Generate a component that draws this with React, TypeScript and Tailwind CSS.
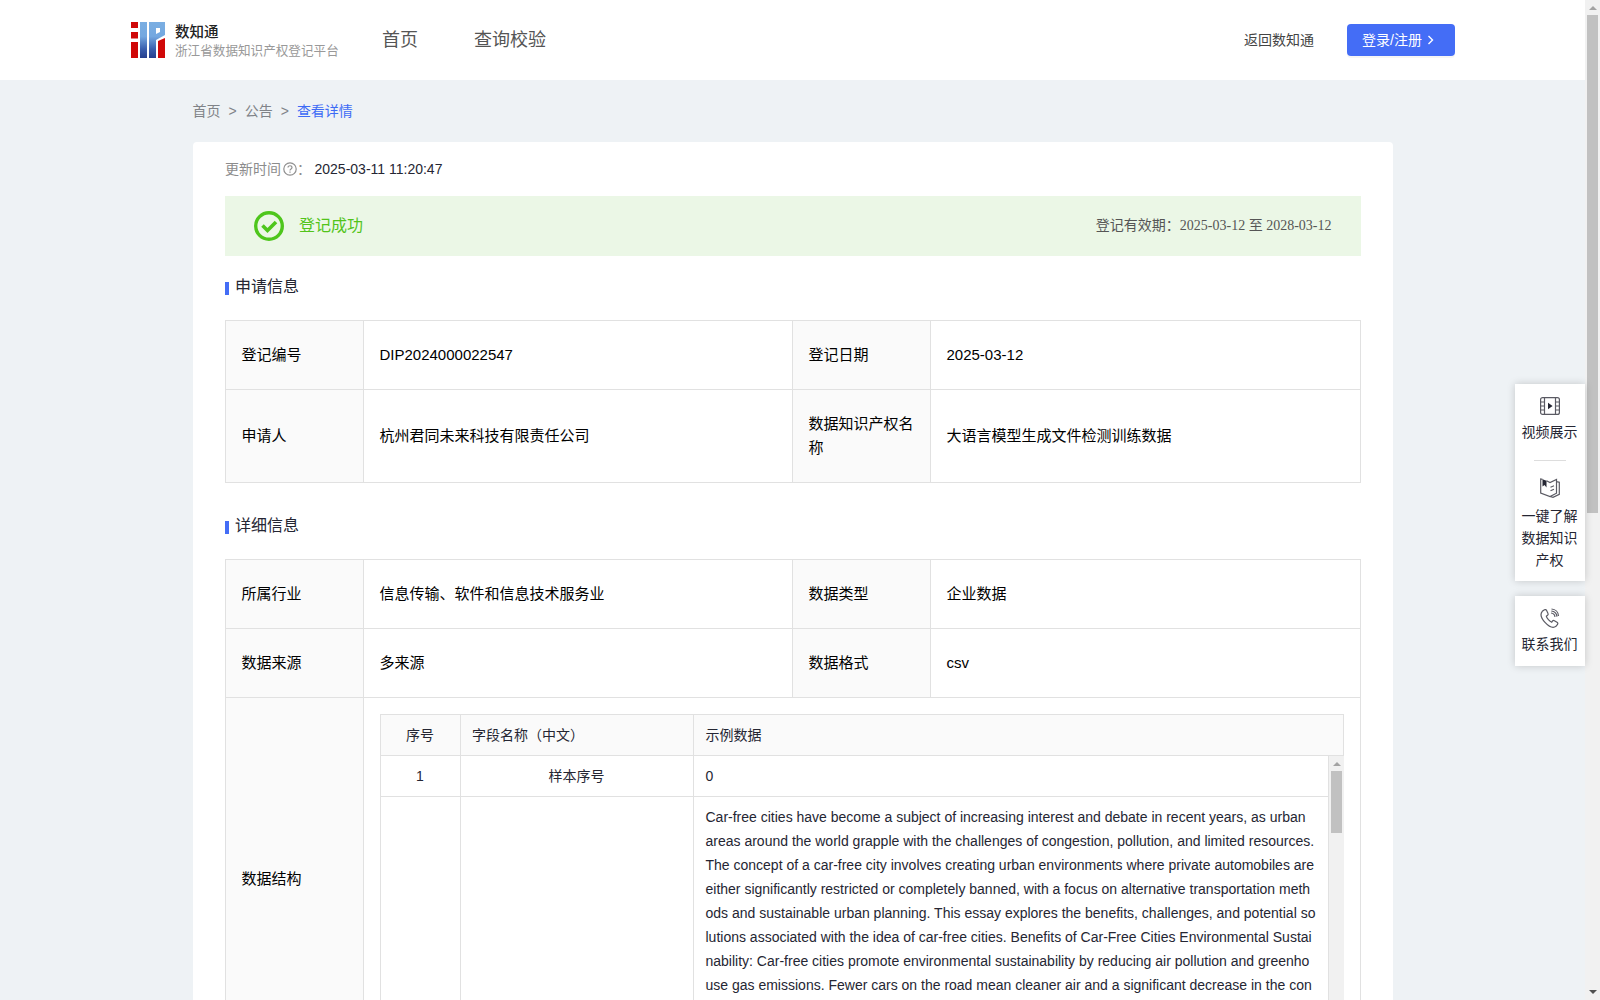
import React from "react";

const essay = [
  "Car-free cities have become a subject of increasing interest and debate in recent years, as urban",
  "areas around the world grapple with the challenges of congestion, pollution, and limited resources.",
  "The concept of a car-free city involves creating urban environments where private automobiles are",
  "either significantly restricted or completely banned, with a focus on alternative transportation meth",
  "ods and sustainable urban planning. This essay explores the benefits, challenges, and potential so",
  "lutions associated with the idea of car-free cities. Benefits of Car-Free Cities Environmental Sustai",
  "nability: Car-free cities promote environmental sustainability by reducing air pollution and greenho",
  "use gas emissions. Fewer cars on the road mean cleaner air and a significant decrease in the con",
];

function Logo() {
  return (
    <svg width="34" height="36" viewBox="0 0 34 36" className="shrink-0">
      <defs>
        <linearGradient id="blue" x1="0" y1="0" x2="0" y2="1">
          <stop offset="0" stopColor="#7aaee2" />
          <stop offset="0.4" stopColor="#74a8e0" />
          <stop offset="0.75" stopColor="#3a5fae" />
          <stop offset="1" stopColor="#263f8e" />
        </linearGradient>
      </defs>
      <path fill="#d00808" d="M0 0h7v6H0zM0 10h7v6.500H0zM0 20h7v16H0zM27 19l7-3v20h-7z" />
      <path fill="url(#blue)" d="M9 0h7v36H9zM18 0h16v13l-9 5v18h-7zM25 6v6l4-2V6z" fillRule="evenodd" />
    </svg>
  );
}

function Label({ children }: { children: React.ReactNode }) {
  return <div className="flex items-center border-r border-b border-[#e1e1e1] bg-[#fafafa] pr-[14px] pl-[15.500px]">{children}</div>;
}

function Value({ children }: { children: React.ReactNode }) {
  return <div className="flex items-center border-r border-b border-[#e1e1e1] pr-[14px] pl-[15.500px]">{children}</div>;
}

function SectionTitle({ children }: { children: React.ReactNode }) {
  return (
    <div className="flex h-6 items-center text-base text-[#252633]">
      <span className="mt-[3px] mr-1.5 h-[13px] w-1 bg-[#446df6]" />
      {children}
    </div>
  );
}

function Arrow({ up = true }: { up?: boolean }) {
  return (
    <svg width="8" height="4" viewBox="0 0 8 4" className="mx-auto block shrink-0">
      <path d={up ? "M0 4L4 0L8 4z" : "M0 0L4 4L8 0z"} fill={up ? "#a3a3a3" : "#505050"} />
    </svg>
  );
}

export default function App() {
  return (
    <div className="flex h-[1000px] w-[1600px] overflow-hidden bg-[#eef2f5] font-['Liberation_Sans','Noto_Sans_CJK_SC',sans-serif] text-sm text-[#252633]">
      <div className="relative flex w-[1585px] flex-col">
        <header className="flex h-20 shrink-0 items-center bg-white pr-[130px] pl-[131px]">
          <Logo />
          <div className="ml-[10px] w-[164px] pt-1 whitespace-nowrap">
            <div className="text-[14.500px] leading-[19px] font-medium text-[#222]">数知通</div>
            <div className="text-[12.600px] leading-[19px] text-[#999]">浙江省数据知识产权登记平台</div>
          </div>
          <nav className="ml-[43px] flex gap-14 text-lg text-[#555]">
            <span>首页</span>
            <span>查询校验</span>
          </nav>
          <span className="ml-auto text-[#444]">返回数知通</span>
          <button className="ml-[33px] flex h-8 w-[108px] items-center rounded-sm bg-[#446df6] pl-[15px] text-white shadow-[0_2px_0_rgba(0,0,0,0.04)]">
            登录/注册
            <svg width="12" height="12" viewBox="0 0 12 12" className="ml-[3px] block" fill="none" stroke="#fff" strokeWidth="1.400">
              <path d="M3.500 2L7.500 6L3.500 10" />
            </svg>
          </button>
        </header>

        <div className="flex h-[62px] shrink-0 items-center pl-[192.500px] text-[#808388]">
          <span>首页</span>
          <span className="mx-2">&gt;</span>
          <span>公告</span>
          <span className="mx-2">&gt;</span>
          <span className="text-[#3d6bf5]">查看详情</span>
        </div>

        <main className="ml-[193px] flex h-[920px] w-[1200px] shrink-0 flex-col rounded bg-white px-8">
          <div className="flex h-[54px] shrink-0 items-center">
            <span className="text-[#8c8c8c]">更新时间</span>
            <svg width="14" height="14" viewBox="0 0 14 14" className="ml-0.5" fill="none" stroke="#8f8f8f" strokeWidth="1.200">
              <circle cx="7" cy="7" r="6.200" />
              <path d="M5 5.600c0-2.500 4-2.500 4 0C9 7 7 7 7 8.500M7 9.500v1.200" />
            </svg>
            <span className="w-[17.500px] text-[#8c8c8c]">：</span>
            <span>2025-03-11 11:20:47</span>
          </div>

          <div className="flex h-[60px] shrink-0 items-center bg-[#ebf7e6] pr-[29.500px] pl-[29px]">
            <svg width="30" height="30" viewBox="0 0 30 30" fill="none" stroke="#4ec61c">
              <circle cx="15" cy="15" r="13.300" strokeWidth="3.400" />
              <path d="M8.500 14.500l5 5L22 11" strokeWidth="3.600" />
            </svg>
            <span className="ml-[15px] text-base text-[#52c41a]">登记成功</span>
            <span className="ml-auto font-['Liberation_Serif','Noto_Sans_CJK_SC',serif] text-[#555]">
              登记有效期：2025-03-12 至 2028-03-12
            </span>
          </div>

          <div className="mt-[19px]">
            <SectionTitle>申请信息</SectionTitle>
          </div>
          <div className="mt-[21px] grid h-[163px] shrink-0 grid-cols-[138px_429px_138px_430px] grid-rows-[69px_93px] border-t border-l border-[#e1e1e1] text-[15px] leading-[23.570px] text-black">
            <Label>登记编号</Label>
            <Value>DIP2024000022547</Value>
            <Label>登记日期</Label>
            <Value>2025-03-12</Value>
            <Label>申请人</Label>
            <Value>杭州君同未来科技有限责任公司</Value>
            <Label>数据知识产权名称</Label>
            <Value>大语言模型生成文件检测训练数据</Value>
          </div>

          <div className="mt-[31px]">
            <SectionTitle>详细信息</SectionTitle>
          </div>
          <div className="mt-[21px] grid shrink-0 grid-cols-[138px_429px_138px_430px] grid-rows-[69px_69px_362px] border-t border-l border-[#e1e1e1] text-[15px] leading-[23.570px] text-black">
            <Label>所属行业</Label>
            <Value>信息传输、软件和信息技术服务业</Value>
            <Label>数据类型</Label>
            <Value>企业数据</Value>
            <Label>数据来源</Label>
            <Value>多来源</Value>
            <Label>数据格式</Label>
            <Value>csv</Value>
            <Label>数据结构</Label>
            <div className="col-span-3 border-r border-b border-[#e1e1e1] p-4 text-sm leading-6 text-[#252633]">
              <div className="grid h-[42px] grid-cols-[80px_233px_650px] border border-[#e1e1e1] bg-[#fafafa]">
                <span className="border-r border-[#e1e1e1] py-2 pr-px text-center">序号</span>
                <span className="border-r border-[#e1e1e1] px-[11px] py-2">字段名称（中文）</span>
                <span className="px-[11.500px] py-2">示例数据</span>
              </div>
              <div className="flex">
                <div className="grid grid-cols-[80px_233px_635px] grid-rows-[41px_300px] border-l border-[#e1e1e1]">
                  <span className="border-r border-b border-[#e1e1e1] py-2 pr-px text-center">1</span>
                  <span className="border-r border-b border-[#e1e1e1] py-2 pr-px text-center">样本序号</span>
                  <span className="border-r border-b border-[#e1e1e1] px-[11.500px] py-2">0</span>
                  <span className="border-r border-[#e1e1e1]" />
                  <span className="border-r border-[#e1e1e1]" />
                  <div className="border-r border-[#e1e1e1] px-[11.500px] py-2 whitespace-nowrap">
                    {essay.map((line) => (
                      <div key={line}>{line}</div>
                    ))}
                  </div>
                </div>
                <div className="w-[15px] bg-[#f1f1f1] pt-[6px]">
                  <Arrow />
                  <div className="mx-auto mt-[5px] h-[62px] w-[11px] bg-[#c1c1c1]" />
                </div>
              </div>
            </div>
          </div>
        </main>

        <aside className="absolute top-[384px] right-0 flex w-[70px] flex-col gap-[15px] text-center leading-[22px]">
          <div className="flex h-[197px] flex-col items-center bg-white pt-3 shadow-[0_0_8px_rgba(0,0,0,0.18)]">
            <svg width="20" height="20" viewBox="0 0 20 20" fill="none" stroke="#5a5a63" strokeWidth="1.200">
              <rect x="0.600" y="1.600" width="18.800" height="16.800" rx="2" />
              <path d="M4.500 1.600v16.800M15.500 1.600v16.800M0.600 6h3.900M0.600 10h3.900M0.600 14h3.900M15.500 6h3.900M15.500 10h3.900M15.500 14h3.900" />
              <path d="M8 6.800v6.400L12.600 10z" fill="#252633" stroke="none" />
            </svg>
            <span className="mt-[5px] mr-px">视频展示</span>
            <span className="mt-[17px] h-px w-8 shrink-0 bg-[#ddd]" />
            <svg width="20" height="20" viewBox="0 0 20 20" className="mt-[17px] shrink-0" fill="none" stroke="#5a5a63" strokeWidth="1.200">
              <path d="M2.500 1.300L0.700 1v14L10 18.500l6.500-3.300V1.500L10 4.500L6.500 2.800M16.500 3.500l2.800.8v12L13 19.300l-3-.8M10.500 9.300L14 7.700M10.500 12.800L14 11.200" />
              <path d="M2.500 1.300v7.200L4.500 7l2 2.500V2.800z" fill="#252633" stroke="none" />
            </svg>
            <span className="mt-[7px] mr-px w-14">一键了解数据知识产权</span>
          </div>
          <div className="flex h-[70px] flex-col items-center bg-white pt-3 shadow-[0_0_8px_rgba(0,0,0,0.18)]">
            <svg width="20" height="20" viewBox="0 0 20 20" fill="none" stroke="#5a5a63" strokeWidth="1.200">
              <path d="M4.500 1.800L2.300 3.300C-.5 6.500 2 11 5 14.300c3.500 3.800 8 6.200 11 4l1.500-1.800c.6-.9.300-1.700-.5-2.200l-2.600-1.600c-.8-.5-1.500-.2-2 .5l-.7 1c-2-.6-5-4-5.400-6l1.200-.9c.7-.6.800-1.300.4-2L6.500 2.300c-.5-.8-1.300-1-2-.5z" />
              <path d="M11 5c2 .2 3.700 1.700 4 3.800M11.500 1c4 .3 6.800 3.300 7 7M11.300 3c3 .2 5.300 2.700 5.700 5.600" />
            </svg>
            <span className="mt-[5px] mr-px">联系我们</span>
          </div>
        </aside>
      </div>

      <div className="flex w-[15px] flex-col bg-[#f1f1f1] pt-[6px] pb-[6px]">
        <Arrow />
        <div className="mx-auto mt-[5px] h-[498px] w-[11px] bg-[#c1c1c1]" />
        <div className="mt-auto">
          <Arrow up={false} />
        </div>
      </div>
    </div>
  );
}
